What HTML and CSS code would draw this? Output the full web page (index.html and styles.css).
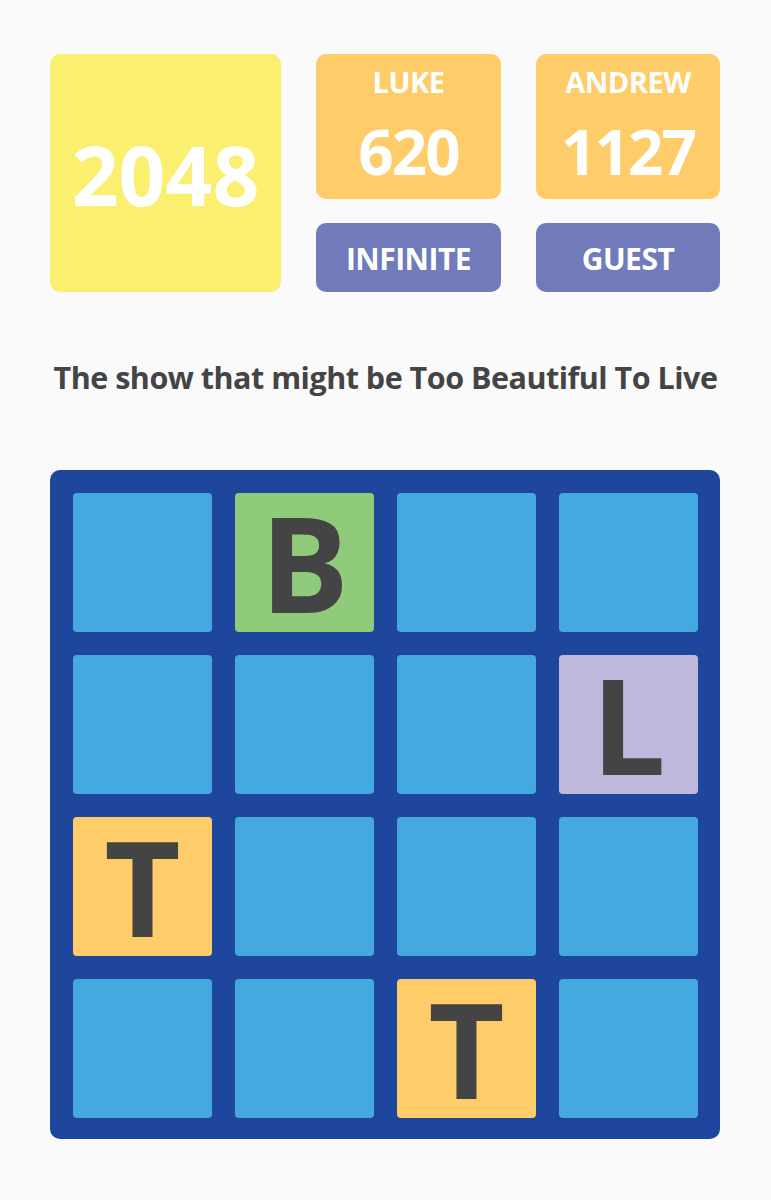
FILE: index.html
```html
<!DOCTYPE html>
<html lang="en">
<head>
<meta charset="utf-8">
<title>2048</title>
<link rel="stylesheet" href="styles.css">
</head>
<body>
<main class="page">
  <header class="header">
    <div class="logo">2048</div>
    <div class="panel">
      <div class="score">
        <div class="score-name">LUKE</div>
        <div class="score-value">620</div>
      </div>
      <div class="score">
        <div class="score-name">ANDREW</div>
        <div class="score-value">1127</div>
      </div>
      <button class="btn">INFINITE</button>
      <button class="btn">GUEST</button>
    </div>
  </header>
  <p class="tagline">The show that might be Too Beautiful To Live</p>
  <section class="board">
    <div class="tile"></div>
    <div class="tile green">B</div>
    <div class="tile"></div>
    <div class="tile"></div>
    <div class="tile"></div>
    <div class="tile"></div>
    <div class="tile"></div>
    <div class="tile lavender">L</div>
    <div class="tile orange">T</div>
    <div class="tile"></div>
    <div class="tile"></div>
    <div class="tile"></div>
    <div class="tile"></div>
    <div class="tile"></div>
    <div class="tile orange">T</div>
    <div class="tile"></div>
  </section>
</main>
</body>
</html>
```

FILE: styles.css
```css
* { box-sizing: border-box; }
html, body { margin: 0; padding: 0; background: #fafafa; }
body {
  font-family: "Open Sans", "Noto Sans", sans-serif;
  font-weight: 700;
}
.page {
  width: 771px;
  padding: 54px 50px 0 50px;
  display: flex;
  flex-direction: column;
}
.header {
  display: flex;
  gap: 35px;
  height: 238px;
}
.logo {
  width: 231px;
  height: 238px;
  background: #faef6f;
  border-radius: 10px;
  color: #fff;
  font-size: 82px;
  letter-spacing: 0;
  display: flex;
  align-items: center;
  justify-content: center;
  padding-top: 2px;
}
.panel {
  display: grid;
  grid-template-columns: 185px 184px;
  grid-template-rows: 145px 69px;
  column-gap: 35px;
  row-gap: 24px;
}
.score {
  background: #fecc69;
  border-radius: 10px;
  color: #fff;
  display: flex;
  flex-direction: column;
  align-items: center;
  padding-top: 8px;
}
.score-name {
  font-size: 29px;
  line-height: 40px;
  letter-spacing: -0.5px;
}
.score-value {
  font-size: 62px;
  line-height: 80px;
  letter-spacing: -2px;
  margin-top: 9px;
}
.btn {
  border: none;
  background: #717bbb;
  border-radius: 10px;
  color: #fff;
  font-family: inherit;
  font-weight: 700;
  font-size: 30px;
  letter-spacing: -0.5px;
  padding: 0;
  padding-top: 2px;
}
.tagline {
  margin: 0;
  height: 178px;
  display: flex;
  align-items: center;
  justify-content: center;
  color: #444;
  font-size: 30.5px;
  letter-spacing: -0.5px;
  padding-bottom: 8px;
}
.board {
  width: 670px;
  height: 669px;
  background: #1e469c;
  border-radius: 10px;
  padding: 23px;
  display: grid;
  grid-template-columns: repeat(4, 139px);
  grid-template-rows: repeat(4, 139px);
  gap: 23px 23px;
  align-content: space-between;
}
.tile {
  background: #45a9df;
  border-radius: 4px;
  color: #444;
  font-size: 132px;
  line-height: 1;
  display: flex;
  align-items: center;
  justify-content: center;
  padding-bottom: 2px;
}
.tile.green { background: #90cb7b; }
.tile.lavender { background: #c0b8dc; }
.tile.orange { background: #fecc69; }
```
